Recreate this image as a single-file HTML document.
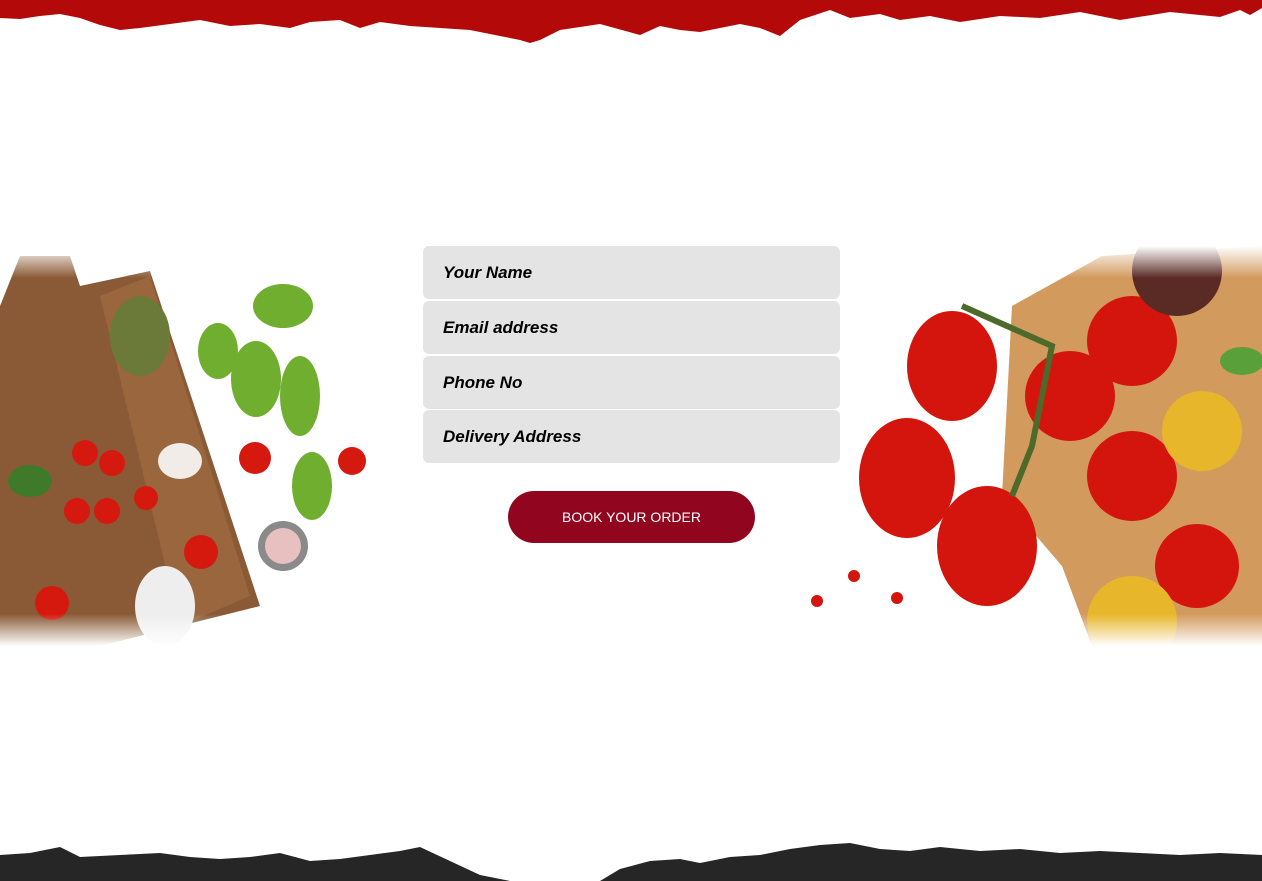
<!DOCTYPE html>
<html><head><style>
body{margin:0;width:1262px;height:881px;position:relative;overflow:hidden;background:#fff;font-family:"Liberation Sans",sans-serif}
.f{position:absolute;left:423px;width:417px;height:53px;background:#e4e4e4;border-radius:6px;font-style:italic;font-weight:bold;font-size:17px;line-height:53px;padding-left:20px;box-sizing:border-box;color:#000}
.btn{position:absolute;left:508px;top:491px;width:247px;height:52px;border-radius:26px;background:#92051f;color:#fff;font-size:14px;text-align:center;line-height:52px}
svg{position:absolute}
</style></head><body>
<svg width="1262" height="50" style="left:0;top:0"><path fill="#b30909" d="M0 0H1262V8L1250 15 1240 10 1220 17 1170 12 1120 20 1080 12 1040 18 1000 16 960 22 930 16 900 20 880 14 850 18 830 10 800 20 780 36 760 28 740 24 720 28 700 32 680 30 660 26 640 35 600 24 560 30 540 40 530 43 520 40 500 36 470 30 440 28 410 26 380 22 360 28 340 20 310 22 290 28 260 24 230 26 200 20 170 24 140 28 120 30 100 25 80 18 60 14 40 16 20 19 0 18Z"/></svg>
<svg width="1262" height="40" style="left:0;top:841px"><path fill="#262626" d="M0 14L30 12 60 6 80 16 120 14 160 12 190 16 220 18 250 16 280 12 310 20 340 18 370 14 400 10 420 6 450 20 480 34 510 40H0Z M600 40L620 28 650 20 680 18 700 22 730 16 760 14 790 8 820 4 850 2 880 8 910 10 940 6 980 10 1020 8 1060 12 1100 10 1140 12 1180 14 1220 12 1262 14V40Z"/></svg>
<svg width="380" height="400" style="left:0;top:246px">
<defs><linearGradient id="g1" x1="0" y1="0" x2="0" y2="1"><stop offset="0" stop-color="#fff" stop-opacity="1"/><stop offset=".08" stop-color="#fff" stop-opacity="0"/><stop offset=".92" stop-color="#fff" stop-opacity="0"/><stop offset="1" stop-color="#fff"/></linearGradient></defs>
<path d="M20 10L70 10 80 40 150 25 260 360 100 400 0 400 0 60Z" fill="#8a5a36"/>
<path d="M100 50L150 30 250 350 180 380Z" fill="#a06b42" opacity=".7"/>
<g fill="#d5190f"><circle cx="85" cy="207" r="13"/><circle cx="112" cy="217" r="13"/><circle cx="77" cy="265" r="13"/><circle cx="107" cy="265" r="13"/><circle cx="146" cy="252" r="12"/><circle cx="52" cy="357" r="17"/><circle cx="201" cy="306" r="17"/><circle cx="255" cy="212" r="16"/><circle cx="352" cy="215" r="14"/></g>
<g fill="#6fae2e"><ellipse cx="283" cy="60" rx="30" ry="22"/><ellipse cx="218" cy="105" rx="20" ry="28"/><ellipse cx="256" cy="133" rx="25" ry="38"/><ellipse cx="300" cy="150" rx="20" ry="40"/><ellipse cx="312" cy="240" rx="20" ry="34"/><ellipse cx="30" cy="235" rx="22" ry="16" fill="#3f7a2a"/><ellipse cx="140" cy="90" rx="30" ry="40" fill="#6b7a38"/></g>
<ellipse cx="180" cy="215" rx="22" ry="18" fill="#f2ece8"/><ellipse cx="165" cy="360" rx="30" ry="40" fill="#eee"/>
<circle cx="283" cy="300" r="25" fill="#8a8a8a"/><circle cx="283" cy="300" r="18" fill="#e8c0c0"/>
<rect width="380" height="400" fill="url(#g1)"/>
</svg>
<svg width="460" height="400" style="left:802px;top:246px">
<path d="M210 60L300 10 460 0 460 400 290 400 260 320 200 250Z" fill="#d39a5e"/>
<g fill="#d4150d"><ellipse cx="150" cy="120" rx="45" ry="55"/><ellipse cx="105" cy="232" rx="48" ry="60"/><ellipse cx="185" cy="300" rx="50" ry="60"/><circle cx="268" cy="150" r="45"/><circle cx="330" cy="95" r="45"/><circle cx="330" cy="230" r="45"/><circle cx="395" cy="320" r="42"/><circle cx="15" cy="355" r="6"/><circle cx="52" cy="330" r="6"/><circle cx="95" cy="352" r="6"/></g>
<g fill="#e8b62b"><circle cx="400" cy="185" r="40"/><circle cx="330" cy="375" r="45"/></g>
<circle cx="375" cy="25" r="45" fill="#5a2a25"/>
<ellipse cx="440" cy="115" rx="22" ry="14" fill="#5aa03a"/>
<path d="M160 60L250 100 230 200 210 250" stroke="#4d6a2a" stroke-width="6" fill="none"/>
<rect width="460" height="400" fill="url(#g1)"/>
</svg>
<div class="f" style="top:246px">Your Name</div>
<div class="f" style="top:301px">Email address</div>
<div class="f" style="top:356px">Phone No</div>
<div class="f" style="top:410px">Delivery Address</div>
<div class="btn">BOOK YOUR ORDER</div>
</body></html>
